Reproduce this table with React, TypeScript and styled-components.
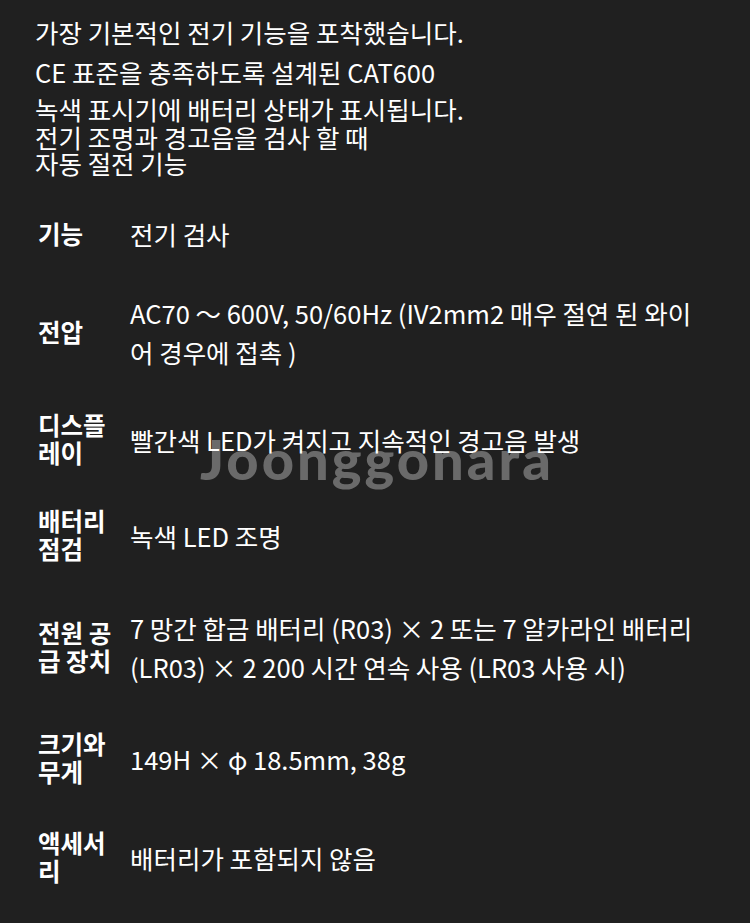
import React from "react";
import styled, { createGlobalStyle } from "styled-components";

const Global = createGlobalStyle`
  html, body { margin: 0; padding: 0; background: #202020; }
  body { font-family: "Noto Sans CJK KR", "Noto Sans", sans-serif; color: #ffffff; }
`;

const Page = styled.div`
  position: relative;
  width: 750px;
  min-height: 923px;
  background: #202020;
  box-sizing: border-box;
  padding: 13px 38px 0 35px;
  overflow: hidden;
`;

const Content = styled.div`
  position: relative;
  z-index: 1;
`;

const Intro = styled.div`
  font-size: 25.5px;
  font-weight: 400;
  color: #ffffff;
  white-space: nowrap;
`;

const Para = styled.p<{ $lh: number; $mt?: number }>`
  margin: ${(p) => p.$mt ?? 0}px 0 0 0;
  line-height: ${(p) => p.$lh}px;
`;

const Specs = styled.div`
  margin-top: 18px;
  padding-left: 3px;
  display: grid;
  grid-template-columns: 92px 1fr;
`;

const Row = styled.div`
  display: contents;
`;

const Label = styled.div<{ $extra?: number }>`
  padding: ${(p) => 20 + (p.$extra ?? 0)}px 6px 20px 0;
  font-size: 24.5px;
  font-weight: 700;
  line-height: 28px;
  display: flex;
  align-items: center;
  word-break: break-all;
`;

const Value = styled.div<{ $extra?: number }>`
  padding: ${(p) => 20 + (p.$extra ?? 0)}px 0 20px 0;
  font-size: 25.5px;
  font-weight: 400;
  line-height: 39px;
  display: flex;
  align-items: center;
`;

const Watermark = styled.div`
  position: absolute;
  z-index: 0;
  left: 196px;
  top: 424px;
  width: 362px;
  text-align: center;
  font-family: "Lato", "Inter", sans-serif;
  font-weight: 900;
  font-size: 56px;
  letter-spacing: 3px;
  color: #6a6a6a;
  pointer-events: none;
  line-height: 70px;
`;

const rows: [string, string, number][] = [
  ["기능", "전기 검사", 0],
  ["전압", "AC70 〜 600V, 50/60Hz (IV2mm2 매우 절연 된 와이어 경우에 접촉 )", 0],
  ["디스플레이", "빨간색 LED가 켜지고 지속적인 경고음 발생", 0],
  ["배터리 점검", "녹색 LED 조명", 0],
  ["전원 공급 장치", "7 망간 합금 배터리 (R03) × 2 또는 7 알카라인 배터리 (LR03) × 2 200 시간 연속 사용 (LR03 사용 시)", 5],
  ["크기와 무게", "149H × φ 18.5mm, 38g", 4],
  ["액세서리", "배터리가 포함되지 않음", 3],
];

export default function App() {
  return (
    <>
      <Global />
      <Page>
        <Watermark>Joonggonara</Watermark>
        <Content>
          <Intro>
            <Para $lh={38}>가장 기본적인 전기 기능을 포착했습니다.</Para>
            <Para $lh={38} $mt={2}>CE 표준을 충족하도록 설계된 CAT600</Para>
            <Para $lh={29} $mt={3}>녹색 표시기에 배터리 상태가 표시됩니다.</Para>
            <Para $lh={26} $mt={1}>
              전기 조명과 경고음을 검사 할 때
              <br />
              자동 절전 기능
            </Para>
          </Intro>
          <Specs>
            {rows.map(([k, v, extra]) => (
              <Row key={k}>
                <Label $extra={extra}>{k}</Label>
                <Value $extra={extra}>{v}</Value>
              </Row>
            ))}
          </Specs>
        </Content>
      </Page>
    </>
  );
}
